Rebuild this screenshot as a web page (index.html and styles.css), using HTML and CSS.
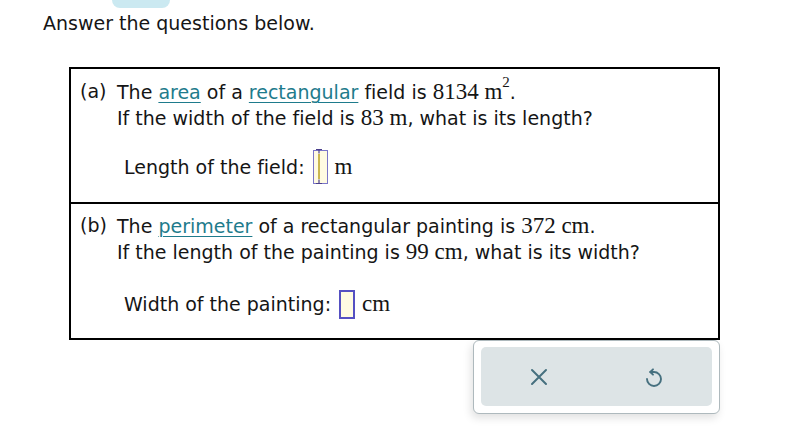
FILE: index.html
```html
<!DOCTYPE html>
<html>
<head>
<meta charset="utf-8">
<link rel="stylesheet" href="styles.css">
</head>
<body>
<div class="tab"></div>
<p class="intro">Answer the questions below.</p>
<div class="box">
  <div class="part">
    <div class="q">
      <span class="lbl">(a)</span>
      <div class="qtext">
        <div>The <a class="term">area</a> of a <a class="term">rectangular</a> field is <span class="m">8134 m<sup>2</sup></span>.</div>
        <div>If the width of the field is <span class="m">83 m</span>, what is its length?</div>
      </div>
    </div>
    <div class="ans">
      <span>Length of the field:</span>
      <span class="inp inp-a">
        <svg class="caret" width="14" height="37" viewBox="0 0 14 37">
          <path d="M4 1.5h6M7 1.5v4M4 35.5h6M7 35.5v-4" stroke="#4a3f8c" stroke-width="1.2" fill="none"/>
          <path d="M7 6v25" stroke="#b8a020" stroke-width="1.5"/>
        </svg>
      </span>
      <span class="m unit">m</span>
    </div>
  </div>
  <div class="part">
    <div class="q">
      <span class="lbl">(b)</span>
      <div class="qtext">
        <div>The <a class="term">perimeter</a> of a rectangular painting is <span class="m">372 cm</span>.</div>
        <div>If the length of the painting is <span class="m">99 cm</span>, what is its width?</div>
      </div>
    </div>
    <div class="ans">
      <span>Width of the painting:</span>
      <span class="inp inp-b"></span>
      <span class="m unit">cm</span>
    </div>
  </div>
</div>
<div class="actions">
  <div class="actions-inner">
    <button class="btn" aria-label="Clear">
      <svg width="18" height="18" viewBox="0 0 18 18"><path d="M2 2L16 16M16 2L2 16" stroke="#46707f" stroke-width="2" fill="none" stroke-linecap="round"/></svg>
    </button>
    <button class="btn" aria-label="Undo">
      <svg width="20" height="22" viewBox="0 0 20 22"><path d="M3 13A7 7 0 1 0 10 6H6.3" stroke="#46707f" stroke-width="1.9" fill="none" stroke-linecap="round"/><path d="M9 3.3L6.3 6L9 8.7" stroke="#46707f" stroke-width="1.9" fill="none" stroke-linecap="round" stroke-linejoin="round"/></svg>
    </button>
  </div>
</div>
</body>
</html>
```
FILE: styles.css
```css
html, body {
  margin: 0;
  padding: 0;
  background: #ffffff;
}
body {
  font-family: "DejaVu Sans", Verdana, sans-serif;
  font-variant-ligatures: none;
  color: #151515;
  font-size: 19px;
  width: 796px;
  height: 445px;
  overflow: hidden;
}
.tab {
  margin-left: 112px;
  width: 58px;
  height: 8px;
  background: #cbe9f1;
  border-radius: 0 0 9px 9px;
}
.intro {
  margin: 3px 0 0 43px;
  font-size: 19px;
  line-height: 24px;
}
.box {
  margin: 32px 0 0 69px;
  width: 647px;
  border: 2px solid #000;
}
.part {
  height: 133px;
  box-sizing: border-box;
  padding: 10px 0 0 9px;
}
.part + .part {
  border-top: 2px solid #000;
  height: 136px;
  padding-top: 9px;
}
.q {
  display: flex;
  line-height: 25px;
}
.lbl {
  width: 37px;
  flex: none;
}
.term {
  color: #1e7b8c;
  text-decoration: underline;
  text-underline-offset: 3px;
  text-decoration-thickness: 1px;
}
.m {
  font-family: "Liberation Serif", "Times New Roman", serif;
  font-size: 23px;
}
.m sup {
  font-size: 15px;
  line-height: 0;
  vertical-align: 12px;
}
.ans {
  display: flex;
  align-items: center;
  margin: 18px 0 0 44px;
  height: 36px;
}
.part + .part .ans {
  margin-top: 21px;
}
.inp {
  display: inline-block;
  box-sizing: border-box;
  margin-left: 8px;
  background: #fffbe2;
  position: relative;
}
.inp-a {
  width: 15px;
  height: 34px;
  border: 1.5px solid #7b76c8;
}
.inp-a .caret {
  position: absolute;
  left: -1.5px;
  top: -3px;
}
.inp-b {
  width: 16px;
  height: 29px;
  border: 2px solid #5550c2;
  margin-left: 8px;
}
.unit {
  margin-left: 7px;
}
.actions {
  margin: 0 0 0 473px;
  width: 247px;
  height: 74px;
  box-sizing: border-box;
  border: 1px solid #aeb9bd;
  border-radius: 6px;
  background: #fff;
  padding: 6px 7px 7px 7px;
  box-shadow: -2px 4px 8px rgba(0,0,0,0.12);
}
.actions-inner {
  height: 100%;
  background: #dde4e6;
  border-radius: 5px;
  display: flex;
  justify-content: space-around;
  align-items: center;
}
.btn {
  border: none;
  background: transparent;
  padding: 0;
  width: 40px;
  height: 40px;
  display: flex;
  align-items: center;
  justify-content: center;
}
```
